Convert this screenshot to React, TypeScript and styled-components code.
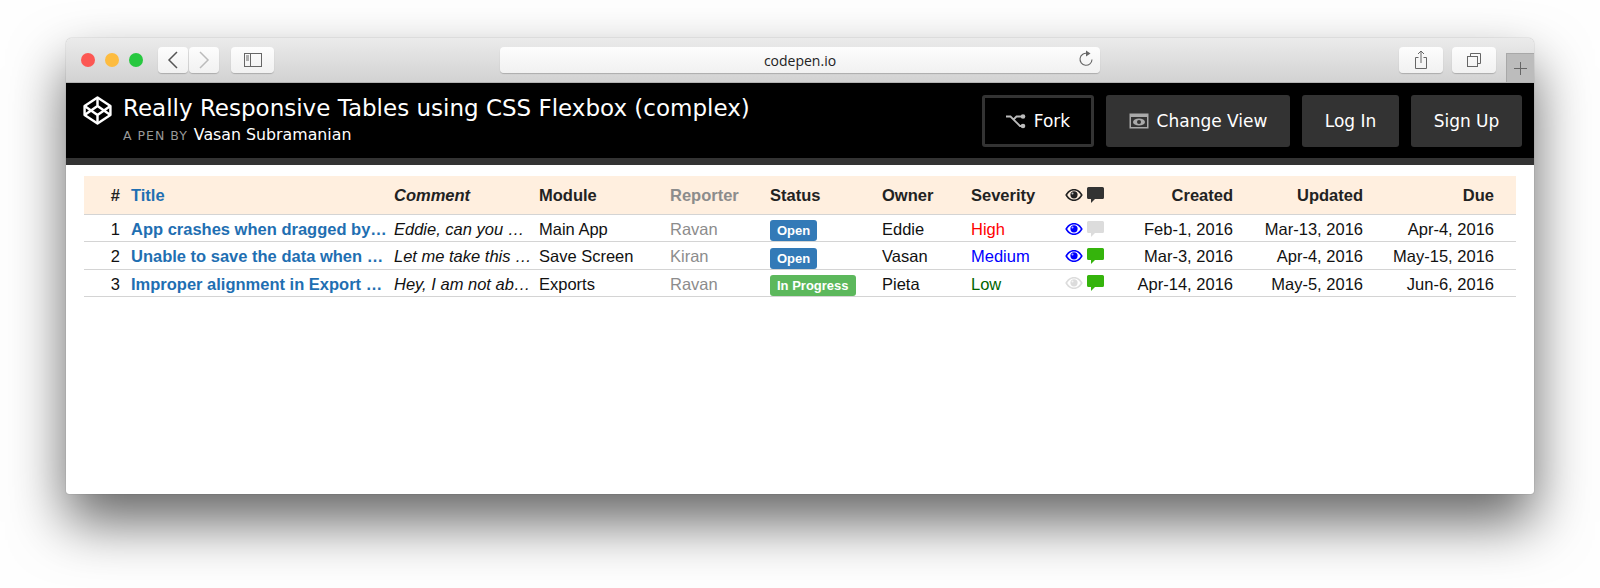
import { createGlobalStyle, styled } from 'styled-components';

const GlobalStyle = createGlobalStyle`
  html, body {
    margin: 0;
    padding: 0;
    background: #fefefe;
  }
  body {
    height: 588px;
    overflow: hidden;
  }
`;

const COLS = '43px 263px 145px 131px 100px 112px 89px 94px 69px 107px 130px 131px';

const rows = [
  {
    id: 1,
    title: 'App crashes when dragged by…',
    comment: 'Eddie, can you …',
    module: 'Main App',
    reporter: 'Ravan',
    status: 'Open',
    owner: 'Eddie',
    severity: 'High',
    watched: true,
    commentColor: '#dcdcdc',
    created: 'Feb-1, 2016',
    updated: 'Mar-13, 2016',
    due: 'Apr-4, 2016',
  },
  {
    id: 2,
    title: 'Unable to save the data when …',
    comment: 'Let me take this …',
    module: 'Save Screen',
    reporter: 'Kiran',
    status: 'Open',
    owner: 'Vasan',
    severity: 'Medium',
    watched: true,
    commentColor: '#35b40c',
    created: 'Mar-3, 2016',
    updated: 'Apr-4, 2016',
    due: 'May-15, 2016',
  },
  {
    id: 3,
    title: 'Improper alignment in Export …',
    comment: 'Hey, I am not ab…',
    module: 'Exports',
    reporter: 'Ravan',
    status: 'In Progress',
    owner: 'Pieta',
    severity: 'Low',
    watched: false,
    commentColor: '#35b40c',
    created: 'Apr-14, 2016',
    updated: 'May-5, 2016',
    due: 'Jun-6, 2016',
  },
];

const severityColors: Record<string, string> = {
  High: '#ff0000',
  Medium: '#0000ff',
  Low: '#006400',
};

function EyeIcon({ color }: { color: string }) {
  return (
    <svg width='18' height='14' viewBox='0 0 18 14'>
      <path
        fillRule='evenodd'
        fill={color}
        d='M9 1C5 1 2 3.600 .3 7 2 10.400 5 13 9 13s7-2.600 8.700-6C16 3.600 13 1 9 1zM9 2.500c3 0 5.300 1.800 6.800 4.500-1.500 2.700-3.800 4.500-6.800 4.500S3.700 9.700 2.200 7C3.700 4.300 6 2.500 9 2.500z'
      />
      <circle cx='9' cy='6.800' r='3.600' fill={color} />
      <circle cx='7.500' cy='5.500' r='1' fill='#fff' opacity='0.7' />
    </svg>
  );
}

function CommentIcon({ color }: { color: string }) {
  return (
    <svg width='17' height='16' viewBox='0 0 17 16'>
      <path
        fill={color}
        d='M1.500 0h14A1.500 1.500 0 0 1 17 1.500v9a1.500 1.500 0 0 1-1.500 1.500H8l-4 4v-4H1.500A1.500 1.500 0 0 1 0 10.500v-9A1.500 1.500 0 0 1 1.500 0z'
      />
    </svg>
  );
}

function CodepenLogo() {
  return (
    <svg width='31' height='31' viewBox='0 0 24 24' fill='none' stroke='#fff' strokeWidth='1.900' strokeLinejoin='round'>
      <polygon points='12 2 22 8.500 22 15.500 12 22 2 15.500 2 8.500' />
      <path d='M12 22v-6.500M22 8.500l-10 7-10-7M2 15.500l10-7 10 7M12 2v6.500' />
    </svg>
  );
}

export default function App() {
  return (
    <Page>
      <GlobalStyle />
      <Window>
        <TitleBar>
          <Lights>
            <Light $color='#fc5753' />
            <Light $color='#fdbc40' />
            <Light $color='#27c83f' />
          </Lights>
          <NavButton>
            <svg width='14' height='20' viewBox='0 0 14 20' fill='none' stroke='#555' strokeWidth='1.500'>
              <path d='M11 2 3 10l8 8' />
            </svg>
          </NavButton>
          <NavButton $next>
            <svg width='14' height='20' viewBox='0 0 14 20' fill='none' stroke='#bbb' strokeWidth='1.500'>
              <path d='M3 2l8 8-8 8' />
            </svg>
          </NavButton>
          <SidebarButton>
            <svg width='18' height='14' viewBox='0 0 18 14' fill='none' stroke='#666' strokeWidth='1'>
              <rect x='.5' y='.5' width='17' height='13' />
              <path d='M6.500 .5v13' />
              <path d='M2 3h3M2 5h3M2 7h3' />
            </svg>
          </SidebarButton>
          <UrlBar>
            codepen.io
            <ReloadSlot>
              <svg width='16' height='18' viewBox='0 0 16 18' fill='none' stroke='#666' strokeWidth='1.100'>
                <path d='M9.500 3.500A6 6 0 1 0 14 9.500' />
                <path fill='#666' stroke='none' d='M8 .5 12.500 3.500 8 6.500z' />
              </svg>
            </ReloadSlot>
          </UrlBar>
          <ToolButton>
            <svg width='14' height='20' viewBox='0 0 14 20' fill='none' stroke='#666' strokeWidth='1'>
              <path d='M4.500 7.500h-3v11h11v-11h-3' />
              <path d='M7 13V1M4 4l3-3 3 3' />
            </svg>
          </ToolButton>
          <ToolButton>
            <svg width='16' height='16' viewBox='0 0 16 16' fill='none' stroke='#666' strokeWidth='1'>
              <rect x='1.500' y='4.500' width='10' height='10' />
              <path d='M4.500 4.500v-3h10v10h-3' />
            </svg>
          </ToolButton>
          <NewTab>
            <svg width='13' height='13' viewBox='0 0 13 13' stroke='#666' strokeWidth='1'>
              <path d='M6.500 0v13M0 6.500h13' />
            </svg>
          </NewTab>
        </TitleBar>

        <PenHeader>
          <CodepenLogo />
          <PenInfo>
            <PenTitle>Really Responsive Tables using CSS Flexbox (complex)</PenTitle>
            <PenMeta>
              <PenBy>A PEN BY</PenBy>
              <PenAuthor>Vasan Subramanian</PenAuthor>
            </PenMeta>
          </PenInfo>
          <HeaderActions>
            <ActionButton $outline $width={112}>
              <svg width='20' height='15' viewBox='0 0 20 15' fill='none' stroke='#bbb' strokeWidth='1.800'>
                <path d='M0 2.500h4.500L14 12h3M8 5l2.500-2.500H17' />
                <circle cx='17' cy='2.500' r='2.300' fill='#bbb' stroke='none' />
                <circle cx='17' cy='12' r='2.300' fill='#bbb' stroke='none' />
              </svg>
              Fork
            </ActionButton>
            <ActionButton $width={184}>
              <svg width='20' height='16' viewBox='0 0 20 16'>
                <rect x='.5' y='.5' width='19' height='15' fill='#aaa' />
                <rect x='2' y='4' width='16' height='10' fill='#333' />
                <ellipse cx='10' cy='9' rx='6' ry='3.600' fill='#aaa' />
                <circle cx='10' cy='9' r='2' fill='#333' />
              </svg>
              Change View
            </ActionButton>
            <ActionButton $width={97}>Log In</ActionButton>
            <ActionButton $width={111}>Sign Up</ActionButton>
          </HeaderActions>
        </PenHeader>

        <Content>
          <HeadRow>
            <NumCell>#</NumCell>
            <TitleCell>Title</TitleCell>
            <CommentCell>Comment</CommentCell>
            <Cell>Module</Cell>
            <MutedCell>Reporter</MutedCell>
            <Cell>Status</Cell>
            <Cell>Owner</Cell>
            <Cell>Severity</Cell>
            <IconCell>
              <EyeIcon color='#222' />
              <CommentIcon color='#333' />
            </IconCell>
            <DateCell>Created</DateCell>
            <DateCell>Updated</DateCell>
            <DateCell>Due</DateCell>
          </HeadRow>
          {rows.map((row) => (
            <BodyRow key={row.id}>
              <NumCell>{row.id}</NumCell>
              <TitleCell>{row.title}</TitleCell>
              <CommentCell>{row.comment}</CommentCell>
              <Cell>{row.module}</Cell>
              <MutedCell>{row.reporter}</MutedCell>
              <BadgeCell>
                <StatusBadge $progress={row.status !== 'Open'}>{row.status}</StatusBadge>
              </BadgeCell>
              <Cell>{row.owner}</Cell>
              <SeverityCell $color={severityColors[row.severity]}>{row.severity}</SeverityCell>
              <IconCell>
                <EyeIcon color={row.watched ? '#0000ff' : '#dcdcdc'} />
                <CommentIcon color={row.commentColor} />
              </IconCell>
              <DateCell>{row.created}</DateCell>
              <DateCell>{row.updated}</DateCell>
              <DateCell>{row.due}</DateCell>
            </BodyRow>
          ))}
        </Content>
      </Window>
    </Page>
  );
}

const Page = styled.div`
  box-sizing: border-box;
  height: 588px;
  padding: 38px 66px 0;
  overflow: hidden;
`;

const Window = styled.div`
  width: 1468px;
  height: 456px;
  border-radius: 6px 6px 3px 3px;
  background: #fff;
  box-shadow: 0 28px 55px rgba(0, 0, 0, 0.6), 0 0 1px rgba(0, 0, 0, 0.5);
  display: flex;
  flex-direction: column;
  overflow: hidden;
`;

const TitleBar = styled.div`
  box-sizing: border-box;
  height: 45px;
  padding-left: 15px;
  display: flex;
  align-items: center;
  background: linear-gradient(#ebebeb, #d2d2d2);
  border-bottom: 1px solid #b4b4b4;
  flex: none;
`;

const Lights = styled.div`
  display: flex;
  gap: 10px;
  margin-right: 15px;
`;

const Light = styled.span<{ $color: string }>`
  width: 14px;
  height: 14px;
  border-radius: 50%;
  background: ${(p) => p.$color};
`;

const ChromeButton = styled.div`
  box-sizing: border-box;
  height: 26px;
  display: flex;
  align-items: center;
  justify-content: center;
  background: linear-gradient(#fdfdfd, #f1f1f1);
  border-radius: 4px;
  box-shadow: 0 1px 1px rgba(0, 0, 0, 0.2);
`;

const NavButton = styled(ChromeButton)<{ $next?: boolean }>`
  width: 30px;
  margin-left: ${(p) => (p.$next ? '1px' : '0')};
`;

const SidebarButton = styled(ChromeButton)`
  width: 43px;
  margin-left: 12px;
`;

const UrlBar = styled(ChromeButton)`
  position: relative;
  width: 600px;
  margin-left: 226px;
  font: 14px 'Open Sans', sans-serif;
  color: #222;
`;

const ReloadSlot = styled.span`
  position: absolute;
  right: 6px;
  top: 3px;
`;

const ToolButton = styled(ChromeButton)`
  width: 44px;
  margin-left: 9px;
  ${UrlBar} + & {
    margin-left: 299px;
  }
`;

const NewTab = styled.div`
  box-sizing: border-box;
  width: 28px;
  height: 29px;
  margin-left: auto;
  align-self: flex-end;
  display: flex;
  align-items: center;
  justify-content: center;
  background: #bcbcbc;
  border-left: 1px solid #a8a8a8;
  border-top: 1px solid #a8a8a8;
`;

const PenHeader = styled.header`
  box-sizing: border-box;
  height: 82px;
  padding: 12px 12px 0 16px;
  background: #000;
  border-bottom: 7px solid #333;
  display: flex;
  align-items: flex-start;
  flex: none;
  color: #fff;
  font-family: 'DejaVu Sans', sans-serif;
`;

const PenInfo = styled.div`
  margin: -1px 0 0 10px;
  display: flex;
  flex-direction: column;
`;

const PenTitle = styled.div`
  font-size: 23px;
  line-height: 28px;
`;

const PenMeta = styled.div`
  display: flex;
  align-items: baseline;
  gap: 6px;
  margin-top: 3px;
`;

const PenBy = styled.span`
  font-size: 12.500px;
  letter-spacing: 1px;
  color: #999;
`;

const PenAuthor = styled.span`
  font-size: 15.800px;
`;

const HeaderActions = styled.div`
  margin-left: auto;
  display: flex;
  gap: 12px;
`;

const ActionButton = styled.div<{ $outline?: boolean; $width: number }>`
  box-sizing: border-box;
  width: ${(p) => p.$width}px;
  height: 52px;
  display: flex;
  align-items: center;
  justify-content: center;
  gap: 8px;
  border-radius: 3px;
  font-size: 17px;
  color: #fff;
  background: ${(p) => (p.$outline ? '#000' : '#333')};
  border: ${(p) => (p.$outline ? '3px solid #333' : 'none')};
`;

const Content = styled.main`
  padding: 11px 18px 0;
  font-family: 'Liberation Sans', Arial, sans-serif;
  font-size: 16.500px;
  color: #111;
`;

const Row = styled.div`
  box-sizing: border-box;
  display: grid;
  grid-template-columns: ${COLS};
  align-items: center;
  border-bottom: 1px solid #d4d4d4;
`;

const HeadRow = styled(Row)`
  height: 39px;
  padding-top: 1px;
  background: #ffefdf;
  font-weight: bold;
  color: #222;
`;

const BodyRow = styled(Row)`
  height: 27.300px;
  padding-top: 3px;
`;

const Cell = styled.div`
  box-sizing: border-box;
  padding: 0 4px;
  white-space: nowrap;
  overflow: hidden;
  text-overflow: ellipsis;
`;

const NumCell = styled(Cell)`
  text-align: right;
  padding-right: 7px;
`;

const TitleCell = styled(Cell)`
  padding-right: 0;
  font-weight: bold;
  color: #1f6fb2;
`;

const CommentCell = styled(Cell)`
  padding-right: 0;
  font-style: italic;
`;

const MutedCell = styled(Cell)`
  color: #8c8c8c;
`;

const BadgeCell = styled(Cell)`
  align-self: end;
  overflow: visible;
  display: flex;
`;

const StatusBadge = styled.span<{ $progress: boolean }>`
  height: 21px;
  padding: 0 7px;
  display: flex;
  align-items: center;
  border-radius: 3px;
  font-size: 13px;
  font-weight: bold;
  color: #fff;
  background: ${(p) => (p.$progress ? '#5cb85c' : '#337ab7')};
`;

const SeverityCell = styled(Cell)<{ $color: string }>`
  color: ${(p) => p.$color};
`;

const IconCell = styled(Cell)`
  display: flex;
  align-items: center;
  gap: 4px;
  margin-top: -2px;
`;

const DateCell = styled(Cell)`
  text-align: right;
`;
